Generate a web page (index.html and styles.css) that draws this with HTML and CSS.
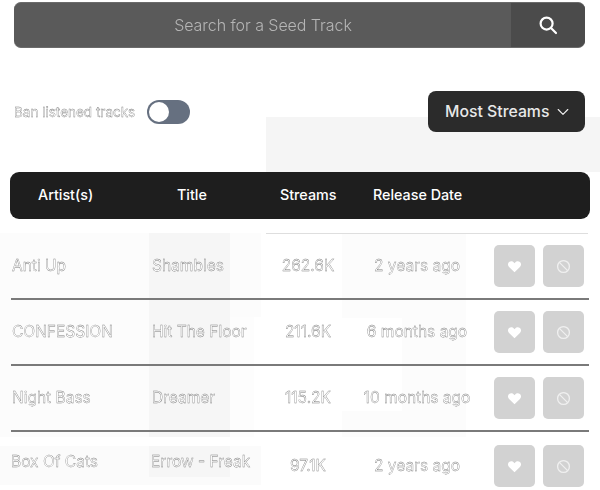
FILE: index.html
```html
<!DOCTYPE html>
<html lang="en">
<head>
<meta charset="utf-8">
<title>Seed Track</title>
<link rel="stylesheet" href="styles.css">
</head>
<body>
<div class="page">
  <div class="patch p1"></div>
  <div class="patch p2"></div>
  <div class="patch p3"></div>
  <div class="patch p4"></div>
  <div class="patch p5"></div>
  <div class="patch p6"></div>
  <div class="patch p7"></div>
  <div class="patch p8"></div>
  <div class="patch p9"></div>
  <div class="patch p10"></div>
  <div class="patch p11"></div>

  <div class="search">
    <div class="search-field">Search for a Seed Track</div>
    <button class="search-btn" aria-label="Search">
      <svg width="20" height="20" viewBox="0 0 20 20" fill="none" stroke="#fff" stroke-width="2.2" stroke-linecap="round"><circle cx="8.6" cy="8.6" r="6"/><path d="M13 13l5 5"/></svg>
    </button>
  </div>

  <div class="controls">
    <div class="ban">
      <span class="ban-label">Ban listened tracks</span>
      <span class="toggle"><span class="knob"></span></span>
    </div>
    <button class="sort">Most Streams
      <svg width="12" height="8" viewBox="0 0 12 8" fill="none" stroke="#f2f2f2" stroke-width="1.1" stroke-linecap="round" stroke-linejoin="round"><path d="M1.2 1.5L6 6.3l4.8-4.8"/></svg>
    </button>
  </div>

  <div class="thead">
    <span>Artist(s)</span>
    <span>Title</span>
    <span>Streams</span>
    <span>Release Date</span>
  </div>

  <div class="rows">
    <div class="row">
      <span class="cell">Anti Up</span><span class="cell">Shambles</span>
      <span class="cell center">262.6K</span><span class="cell center">2 years ago</span>
      <div class="actions">
        <button class="act" aria-label="Like"><svg class="ic" viewBox="0 0 16 16"><path class="heart" d="M8 14.2L2.2 8.6C.6 7 .7 4.6 2.2 3.3c1.6-1.3 3.9-1 5.1.5l.7.8.7-.8c1.2-1.5 3.5-1.8 5.1-.5 1.5 1.3 1.6 3.7 0 5.3z"/></svg></button>
        <button class="act" aria-label="Ban"><svg class="ic" viewBox="0 0 16 16"><circle class="ban-ring" cx="8" cy="8" r="6.3"/><path class="ban-ring" d="M3.6 3.6l8.8 8.8"/></svg></button>
      </div>
    </div>
    <div class="row">
      <span class="cell">CONFESSION</span><span class="cell">Hit The Floor</span>
      <span class="cell center">211.6K</span><span class="cell center">6 months ago</span>
      <div class="actions">
        <button class="act" aria-label="Like"><svg class="ic" viewBox="0 0 16 16"><path class="heart" d="M8 14.2L2.2 8.6C.6 7 .7 4.6 2.2 3.3c1.6-1.3 3.9-1 5.1.5l.7.8.7-.8c1.2-1.5 3.5-1.8 5.1-.5 1.5 1.3 1.6 3.7 0 5.3z"/></svg></button>
        <button class="act" aria-label="Ban"><svg class="ic" viewBox="0 0 16 16"><circle class="ban-ring" cx="8" cy="8" r="6.3"/><path class="ban-ring" d="M3.6 3.6l8.8 8.8"/></svg></button>
      </div>
    </div>
    <div class="row">
      <span class="cell">Night Bass</span><span class="cell">Dreamer</span>
      <span class="cell center">115.2K</span><span class="cell center">10 months ago</span>
      <div class="actions">
        <button class="act" aria-label="Like"><svg class="ic" viewBox="0 0 16 16"><path class="heart" d="M8 14.2L2.2 8.6C.6 7 .7 4.6 2.2 3.3c1.6-1.3 3.9-1 5.1.5l.7.8.7-.8c1.2-1.5 3.5-1.8 5.1-.5 1.5 1.3 1.6 3.7 0 5.3z"/></svg></button>
        <button class="act" aria-label="Ban"><svg class="ic" viewBox="0 0 16 16"><circle class="ban-ring" cx="8" cy="8" r="6.3"/><path class="ban-ring" d="M3.6 3.6l8.8 8.8"/></svg></button>
      </div>
    </div>
    <div class="row last">
      <span class="cell raised">Box Of Cats</span><span class="cell raised">Errow - Freak</span>
      <span class="cell center">97.1K</span><span class="cell center">2 years ago</span>
      <div class="actions">
        <button class="act" aria-label="Like"><svg class="ic" viewBox="0 0 16 16"><path class="heart" d="M8 14.2L2.2 8.6C.6 7 .7 4.6 2.2 3.3c1.6-1.3 3.9-1 5.1.5l.7.8.7-.8c1.2-1.5 3.5-1.8 5.1-.5 1.5 1.3 1.6 3.7 0 5.3z"/></svg></button>
        <button class="act" aria-label="Ban"><svg class="ic" viewBox="0 0 16 16"><circle class="ban-ring" cx="8" cy="8" r="6.3"/><path class="ban-ring" d="M3.6 3.6l8.8 8.8"/></svg></button>
      </div>
    </div>
  </div>
</div>
</body>
</html>
```
FILE: styles.css
```css
* { box-sizing: border-box; }
html, body { margin: 0; padding: 0; background: #fff; }
body { font-family: Inter, "Liberation Sans", sans-serif; overflow: hidden; }
button { font-family: inherit; border: 0; padding: 0; }

.page { position: relative; width: 600px; height: 490px; padding-top: 2px; overflow: hidden; }
.page > :not(.patch) { position: relative; }

.patch { position: absolute; background: #fcfcfc; }
.p1 { left: 266px; top: 117px; width: 334px; height: 55px; background: #f5f5f5; }
.p2 { left: 0; top: 233px; width: 261px; height: 84px; }
.p3 { left: 0; top: 317px; width: 221px; height: 120px; }
.p4 { left: 149px; top: 233px; width: 81px; height: 204px; background: #f6f6f6; }
.p5 { left: 230px; top: 317px; width: 24px; height: 120px; background: #fdfdfd; }
.p6 { left: 342px; top: 233px; width: 124px; height: 85px; }
.p7 { left: 402px; top: 318px; width: 64px; height: 93px; }
.p8 { left: 342px; top: 411px; width: 124px; height: 26px; }
.p9 { left: 0; top: 446px; width: 261px; height: 39px; background: #fbfbfb; }
.p10 { left: 149px; top: 446px; width: 81px; height: 31px; background: #f6f6f6; }
.p11 { left: 266px; top: 233px; width: 322px; height: 1px; background: #dedede; }

.search { display: flex; width: 571px; height: 46px; margin-left: 14px; border-radius: 7px; overflow: hidden; background: #5a5a5a; border: 1px solid #6b6b6b; border-left: 0; border-right: 0; }
.search-field { flex: 1; display: flex; align-items: center; justify-content: center; padding-left: 1px; color: #b5b5b5; font-size: 16px; font-weight: 300; letter-spacing: -.05px; will-change: transform; }
.search-btn { width: 74px; display: flex; align-items: center; justify-content: center; background: #4b4b4b; }

.controls { display: flex; justify-content: space-between; align-items: center; width: 571px; height: 41px; margin: 43px 0 0 14px; }
.ban { display: flex; align-items: center; gap: 12px; }
.ban-label { font-size: 13.5px; color: #fff; -webkit-text-stroke: .35px #7c7c7c; will-change: transform; }
.toggle { display: block; width: 43px; height: 24px; padding: 2px; border-radius: 12px; background: #667080; }
.knob { display: block; width: 20px; height: 20px; border-radius: 50%; background: #fff; }
.sort { display: flex; align-items: center; gap: 8px; width: 157px; height: 41px; padding-left: 17px; border-radius: 8px; background: #2b2b2b; color: #e8e8e8; font-size: 15.8px; font-weight: 500; }

.thead { display: grid; grid-template-columns: 139px 103px 93px 1fr; align-items: center; width: 580px; height: 47px; margin: 40px 0 0 10px; padding: 0 0 2px 28px; border-radius: 9px; background: #1e1e1e; color: #fff; font-size: 14.3px; font-weight: 500; }

.rows { width: 578px; margin: 14px 0 0 11px; border-top: 1px solid transparent; }
.row { display: grid; grid-template-columns: 140px 112px 88px 130px 1fr; align-items: center; height: 66px; padding: 0 4px 0 1px; border-bottom: 2px solid #7a7a7a; }
.row.last { border-bottom: 0; margin-top: 1px; }
.cell { font-size: 15.5px; margin-top: -2px; color: #fff; -webkit-text-stroke: .35px #7c7c7c; white-space: nowrap; will-change: transform; }
.center { text-align: center; }
.raised { margin: -10px 0 0 -1px; }
.actions { display: flex; justify-content: flex-end; gap: 8px; padding-right: 1px; }
.act { display: flex; align-items: center; justify-content: center; width: 41px; height: 42px; border-radius: 5px; background: #d2d2d2; }
.ic { width: 15px; height: 15px; display: block; }
.heart { fill: #fff; }
.ban-ring { fill: none; stroke: #f0f0f0; stroke-width: 1.4; }
```
